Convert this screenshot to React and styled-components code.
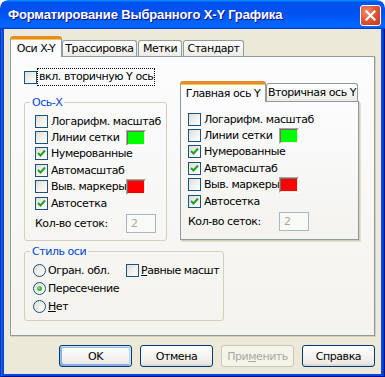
import React from 'react';
import styled, { createGlobalStyle } from 'styled-components';

const Global = createGlobalStyle`
  html, body { margin: 0; padding: 0; background: #fff; }
  body { font-family: "DejaVu Sans", "Liberation Sans", sans-serif; font-size: 11px; letter-spacing: -0.45px; color: #000; }
  * { box-sizing: border-box; }
`;

const Window = styled.div`
  width: 385px;
  height: 377px;
  display: flex;
  flex-direction: column;
  overflow: hidden;
  border-radius: 8px 8px 0 0;
`;

const TitleBar = styled.div`
  height: 29px;
  flex: none;
  display: flex;
  align-items: flex-start;
  justify-content: space-between;
  padding: 0 4px 0 8px;
  border-radius: 8px 8px 0 0;
  background: linear-gradient(180deg, #0997ff, #0053ee 8%, #0050ee 40%, #06f 88%, #06f 93%, #005bff 95%, #003dd7 96%, #003dd7);
`;

const Title = styled.span`
  margin-top: 7px;
  font: bold 13px "Liberation Sans", sans-serif;
  letter-spacing: -0.15px;
  color: #fff;
  text-shadow: 1px 1px #0f1089;
  white-space: nowrap;
`;

const CloseBtn = styled.div`
  margin-top: 5px;
  width: 21px;
  height: 21px;
  border: 1px solid #fff;
  border-radius: 3px;
  background: radial-gradient(circle at 30% 30%, #f08c6e 0%, #e0583a 45%, #c2351a 100%);
  display: flex;
  align-items: center;
  justify-content: center;
`;

const Frame = styled.div`
  flex: 1;
  display: flex;
  padding: 0 4px 3px 4px;
  background: #0846dc;
  box-shadow: inset 1px 0 #0a30b8, inset -1px 0 #00138c, inset 0 -1px #00138c, inset 2px 0 #166aee, inset -2px 0 #0834c8;
`;

const Client = styled.div`
  flex: 1;
  display: flex;
  flex-direction: column;
  background: #ece9d8;
  padding: 7px 6px 7px 6px;
`;

const TabStrip = styled.div`
  display: flex;
  align-items: flex-end;
  height: ${p => p.$h}px;
  flex: none;
`;

const Tab = styled.div`
  width: ${p => p.$w}px;
  height: ${p => p.$h}px;
  margin-left: ${p => p.$ml || 0}px;
  display: flex;
  align-items: center;
  justify-content: center;
  white-space: nowrap;
  border: 1px solid #919b9c;
  border-bottom: none;
  border-radius: 3px 3px 0 0;
  padding-top: ${p => (p.$active ? 1 : 0)}px;
  position: relative;
  background: ${p => (p.$active ? '#fcfcfe' : 'linear-gradient(180deg, #fff, #fafaf9 30%, #ecebe6 100%)')};
  ${p => p.$active && `
    margin-bottom: -1px;
    z-index: 1;
    border-top: 3px solid #e68b2c;
    box-shadow: inset 0 1px #ffc83c;
  `}
`;

const Panel = styled.div`
  flex: 1;
  border: 1px solid #919b9c;
  box-shadow: 1px 1px 0 #d0cebf;
  background: linear-gradient(180deg, #fcfcfe, #f4f3ee);
  display: grid;
  grid-template-columns: 143px 179px;
  column-gap: 13px;
  align-content: start;
  align-items: start;
  padding: 12px 0 0 13px;
`;

const LeftCol = styled.div`
  display: flex;
  flex-direction: column;
`;

const TopCheck = styled.div`
  height: 16px;
  display: flex;
  align-items: center;
  gap: 1px;
`;

const Focus = styled.span`
  outline: 1px dotted #000;
  outline-offset: 0;
  padding: 0 1px;
  line-height: 16px;
  white-space: nowrap;
`;

const Group = styled.fieldset`
  margin: ${p => p.$mt}px 0 0 0;
  padding: ${p => p.$pt}px ${p => p.$px}px ${p => p.$pb}px;
  width: ${p => p.$w}px;
  min-width: 0;
  border: 1px solid #d0d0bf;
  border-radius: 3px;
  ${p => p.$span && 'grid-column: 1 / -1;'}
`;

const Legend = styled.legend`
  color: #0046d5;
  padding: 0 2px;
  margin-left: ${p => p.$ml}px;
  line-height: 13px;
  font-size: 11px;
`;

const Row = styled.div`
  height: 16.4px;
  display: grid;
  grid-template-columns: 16px 75px auto;
  align-items: center;
  white-space: nowrap;
`;

const CountRow = styled.div`
  margin-top: 3px;
  height: 19px;
  display: grid;
  grid-template-columns: 91px 30px;
  align-items: center;
  white-space: nowrap;
`;

const Input = styled.div`
  width: 30px;
  height: 19px;
  border: 1px solid #a7b6c9;
  background: #f9f9f6;
  color: #aca899;
  padding-left: 4px;
  line-height: 17px;
`;

const Box = styled.span`
  width: 13px;
  height: 13px;
  flex: none;
  border: 1px solid #1c5180;
  background: linear-gradient(135deg, #dcdcd7 0%, #f0f0ec 50%, #ffffff 100%);
  display: inline-flex;
  align-items: center;
  justify-content: center;
  border-radius: ${p => (p.$round ? '50%' : '0')};
`;

const Dot = styled.span`
  width: 5px;
  height: 5px;
  border-radius: 50%;
  background: radial-gradient(circle at 40% 40%, #8be387 0%, #3aba35 50%, #1f9a1b 100%);
`;

const Swatch = styled.span`
  width: 20px;
  height: 16px;
  border: 1px solid;
  border-color: #aca899 #fff #fff #aca899;
  display: inline-flex;
`;

const SwatchFill = styled.span`
  flex: 1;
  border: 1px solid;
  border-color: #716f64 #f1efe2 #f1efe2 #716f64;
  background: ${p => p.$c};
`;

const InnerTabs = styled.div`
  margin-top: 12px;
  display: flex;
  flex-direction: column;
`;

const InnerPanel = styled.div`
  height: 139px;
  border: 1px solid #919b9c;
  box-shadow: 1px 1px 0 #d0cebf, 2px 2px 0 #e3e0d0;
  background: linear-gradient(180deg, #fcfcfe, #f4f3ee);
  padding: 9px 0 0 7px;
  display: flex;
  flex-direction: column;
`;

const StyleGrid = styled.div`
  display: grid;
  grid-template-columns: 93px auto;
  grid-auto-rows: 18px;
  align-items: center;
  white-space: nowrap;
`;

const Opt = styled.div`
  display: flex;
  align-items: center;
  gap: ${p => p.$gap}px;
`;

const Buttons = styled.div`
  flex: none;
  margin-top: 9px;
  display: flex;
  justify-content: flex-end;
  gap: 8px;
`;

const Button = styled.div`
  width: 73px;
  height: 22px;
  border: 1px solid ${p => (p.$disabled ? '#c9c7ba' : '#003c74')};
  border-radius: 3px;
  display: flex;
  align-items: center;
  justify-content: center;
  color: ${p => (p.$disabled ? '#aca899' : '#000')};
  background: ${p => (p.$disabled ? '#f5f4ea' : 'linear-gradient(180deg, #fff, #ecebe6 86%, #d6d0c5)')};
  box-shadow: ${p => (p.$default
    ? 'inset -1px 1px #cee7ff, inset 1px 2px #98b8ea, inset -2px 2px #bcd4f6, inset 1px -1px #89ade4, inset 2px -2px #89ade4'
    : 'none')};
`;

const Check = ({ on, round }) => (
  <Box $round={round}>
    {on && !round && (
      <svg width="9" height="9" viewBox="0 0 9 9">
        <polyline points="1,4 3.5,6.5 8,1.5" fill="none" stroke="#21a121" strokeWidth="2" />
      </svg>
    )}
    {on && round && <Dot />}
  </Box>
);

const axisRows = [
  { label: 'Логарифм. масштаб', on: false },
  { label: 'Линии сетки', on: false, color: '#00ff00' },
  { label: 'Нумерованные', on: true },
  { label: 'Автомасштаб', on: true },
  { label: 'Выв. маркеры', on: false, color: '#ff0000' },
  { label: 'Автосетка', on: true },
];

const AxisRows = () => (
  <>
    {axisRows.map(r => (
      <Row key={r.label}>
        <Check on={r.on} />
        <span>{r.label}</span>
        {r.color ? <Swatch><SwatchFill $c={r.color} /></Swatch> : <span />}
      </Row>
    ))}
    <CountRow>
      <span>Кол-во сеток:</span>
      <Input>2</Input>
    </CountRow>
  </>
);

export default function App() {
  return (
    <Window>
      <Global />
      <TitleBar>
        <Title>Форматирование Выбранного X-Y Графика</Title>
        <CloseBtn>
          <svg width="11" height="11" viewBox="0 0 11 11">
            <path d="M1.5 1.5 L9.5 9.5 M9.5 1.5 L1.5 9.5" stroke="#fff" strokeWidth="2.2" strokeLinecap="square" />
          </svg>
        </CloseBtn>
      </TitleBar>
      <Frame>
        <Client>
          <TabStrip $h={20}>
            <Tab $active $w={52} $h={21}>Оси X-Y</Tab>
            <Tab $w={75} $h={16}>Трассировка</Tab>
            <Tab $w={44} $h={16} $ml={1}>Метки</Tab>
            <Tab $w={61} $h={16} $ml={1}>Стандарт</Tab>
          </TabStrip>
          <Panel>
            <LeftCol>
              <TopCheck>
                <Check on={false} />
                <Focus>вкл. вторичную Y ось</Focus>
              </TopCheck>
              <Group $mt={11} $pt={4} $px={10} $pb={7} $w={143}>
                <Legend $ml={-5}>Ось-X</Legend>
                <AxisRows />
              </Group>
            </LeftCol>
            <InnerTabs>
              <TabStrip $h={20}>
                <Tab $active $w={86} $h={21}>Главная ось Y</Tab>
                <Tab $w={92} $h={18}>Вторичная ось Y</Tab>
              </TabStrip>
              <InnerPanel>
                <AxisRows />
              </InnerPanel>
            </InnerTabs>
            <Group $mt={4} $pt={3} $px={8} $pb={5} $w={200} $span>
              <Legend $ml={-3}>Стиль оси</Legend>
              <StyleGrid>
                <Opt $gap={2}><Check round /><span>Огран. обл.</span></Opt>
                <Opt $gap={2}><Check /><span><u>Р</u>авные масшт</span></Opt>
                <Opt $gap={2}><Check round on /><span>Пересечение</span></Opt>
                <span />
                <Opt $gap={2}><Check round /><span><u>Н</u>ет</span></Opt>
              </StyleGrid>
            </Group>
          </Panel>
          <Buttons>
            <Button $default>OK</Button>
            <Button>Отмена</Button>
            <Button $disabled>При<u>м</u>енить</Button>
            <Button>Справка</Button>
          </Buttons>
        </Client>
      </Frame>
    </Window>
  );
}
